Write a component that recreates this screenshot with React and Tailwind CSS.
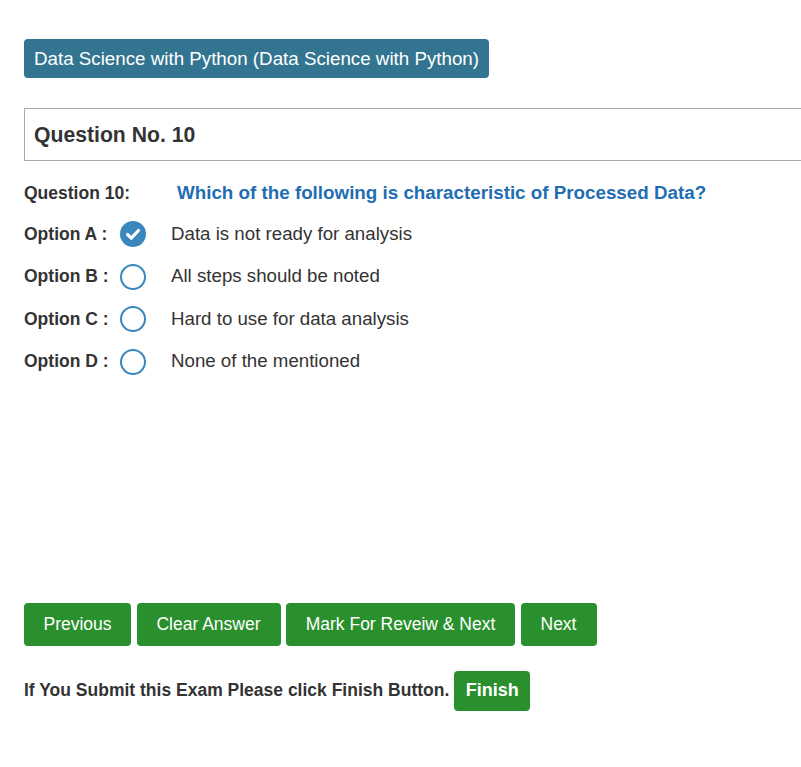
import React, { useState } from "react";

const options = [
  { key: "A", text: "Data is not ready for analysis" },
  { key: "B", text: "All steps should be noted" },
  { key: "C", text: "Hard to use for data analysis" },
  { key: "D", text: "None of the mentioned" },
];

const navButtons = [
  { label: "Previous", w: "w-[107px]" },
  { label: "Clear Answer", w: "w-[144px]" },
  { label: "Mark For Reveiw & Next", w: "w-[229px]" },
  { label: "Next", w: "w-[76px]" },
];

function Radio({ checked }) {
  if (checked) {
    return (
      <svg width="28" height="28" viewBox="0 0 28 28">
        <circle cx="14" cy="14" r="13" fill="#3a87bd" />
        <path d="M8.5 14.5 L12.3 18.2 L19.5 10.5" fill="none" stroke="#fff" strokeWidth="3.2" strokeLinecap="round" strokeLinejoin="round" />
      </svg>
    );
  }
  return (
    <svg width="28" height="28" viewBox="0 0 28 28">
      <circle cx="14" cy="14" r="12" fill="#fff" stroke="#3a87bd" strokeWidth="2" />
    </svg>
  );
}

export default function App() {
  const [answer, setAnswer] = useState("A");

  return (
    <div className="bg-white w-full min-h-[767px] overflow-hidden pl-6 pt-[39px] text-[#333] font-['Liberation_Sans',Arial,sans-serif]">
      {/* Subject badge */}
      <div className="inline-block bg-[#337591] text-white text-[18.75px] leading-[22px] px-[10px] py-[8.5px] rounded whitespace-nowrap">
        Data Science with Python (Data Science with Python)
      </div>

      {/* Question header box */}
      <div className="mt-[30px] h-[53px] border border-r-0 border-[#aaa] flex items-center px-[9px]">
        <h2 className="text-[21.2px] font-bold text-[#333]">Question No. 10</h2>
      </div>

      {/* Question */}
      <div className="mt-[19px] flex items-center h-[26px] whitespace-nowrap">
        <span className="w-[153px] text-[17.5px] font-bold">Question 10:</span>
        <span className="text-[18.8px] font-bold text-[#1f6db3]">
          Which of the following is characteristic of Processed Data?
        </span>
      </div>

      <div className="mt-[14px] flex flex-col gap-[14.5px]">
        {options.map((o) => (
          <div key={o.key} className="flex items-center h-[28px] whitespace-nowrap">
            <span className="w-[95px] text-[17.5px] font-bold">Option {o.key} :</span>
            <button
              type="button"
              onClick={() => setAnswer(o.key)}
              className="w-[28px] h-[28px] p-0"
            >
              <Radio checked={answer === o.key} />
            </button>
            <span className="ml-[24px] text-[18.7px]">{o.text}</span>
          </div>
        ))}
      </div>

      {/* Navigation buttons */}
      <div className="mt-[227px] flex gap-[5.5px]">
        {navButtons.map((b) => (
          <button
            key={b.label}
            type="button"
            className={`${b.w} bg-[#2a902d] text-white text-[17.5px] h-[43px] rounded whitespace-nowrap`}
          >
            {b.label}
          </button>
        ))}
      </div>

      <div className="mt-[25px] flex items-center whitespace-nowrap">
        <span className="text-[17.5px] font-bold">If You Submit this Exam Please click Finish Button.</span>
        <button type="button" className="ml-[5px] w-[76px] bg-[#2a902d] text-white text-[18px] font-bold h-[40px] rounded">
          Finish
        </button>
      </div>
    </div>
  );
}
